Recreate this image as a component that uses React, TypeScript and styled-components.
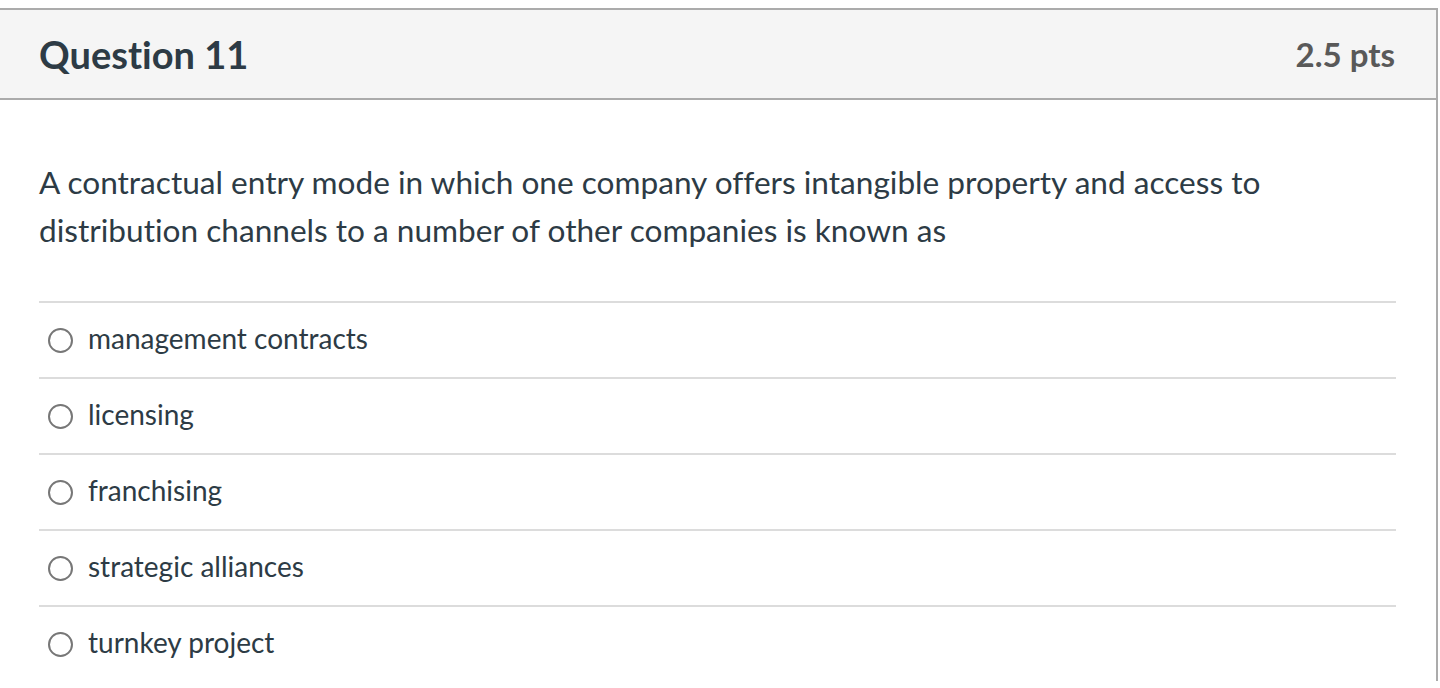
import styled, { createGlobalStyle } from 'styled-components'

const GlobalStyle = createGlobalStyle`
  html, body {
    margin: 0;
    padding: 0;
    background: #ffffff;
  }
  body {
    font-family: Lato, "Noto Sans", sans-serif;
    font-variant-ligatures: none;
    color: #2d3b45;
  }
`

const answers = [
    'management contracts',
    'licensing',
    'franchising',
    'strategic alliances',
    'turnkey project',
]

const Card = styled.div`
  margin-top: 8px;
  width: 1436px;
  border-top: 2px solid #ababab;
  border-right: 2px solid #ababab;
  background: #ffffff;
`

const Header = styled.div`
  display: flex;
  align-items: center;
  justify-content: space-between;
  height: 88px;
  padding: 0 41px 0 39px;
  background: #f5f5f5;
  border-bottom: 2px solid #ababab;
`

const Title = styled.h2`
  margin: 0;
  font-size: 38px;
  font-weight: 700;
  color: #2d3b45;
`

const Points = styled.span`
  font-size: 33px;
  font-weight: 700;
  color: #595959;
`

const Body = styled.div`
  padding: 58px 40px 0 39px;
`

const Prompt = styled.p`
  margin: 0 0 47px;
  font-size: 31.6px;
  line-height: 48px;
  color: #2d3b45;
`

const AnswerList = styled.div`
  display: flex;
  flex-direction: column;
`

const AnswerRow = styled.label`
  box-sizing: border-box;
  display: flex;
  align-items: center;
  gap: 15px;
  height: 76px;
  padding: 0 0 4px 9px;
  border-top: 2px solid #dcdcdc;
  font-size: 28px;
  color: #2d3b45;
`

const Radio = styled.span`
  box-sizing: border-box;
  width: 25px;
  height: 25px;
  margin-top: 4px;
  border-radius: 50%;
  border: 2px solid #777777;
  background: #ffffff;
  flex-shrink: 0;
`

export default function App() {
    return (
        <>
            <GlobalStyle />
            <Card>
                <Header>
                    <Title>Question 11</Title>
                    <Points>2.5 pts</Points>
                </Header>
                <Body>
                    <Prompt>
                        A contractual entry mode in which one company offers intangible property and access to
                        distribution channels to a number of other companies is known as
                    </Prompt>
                    <AnswerList>
                        {answers.map((answer) => (
                            <AnswerRow key={answer}>
                                <Radio />
                                {answer}
                            </AnswerRow>
                        ))}
                    </AnswerList>
                </Body>
            </Card>
        </>
    )
}
